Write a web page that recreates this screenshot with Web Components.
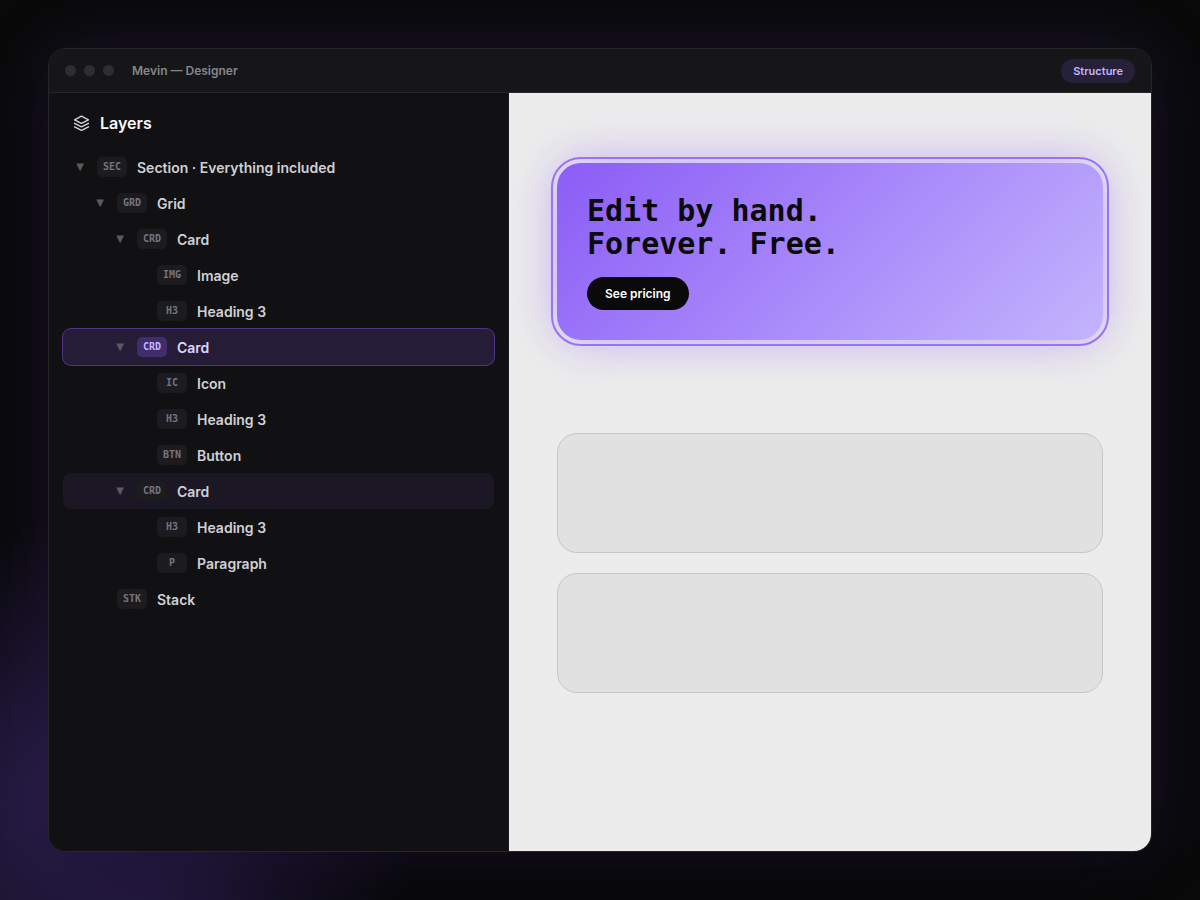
<!DOCTYPE html>
<html lang="en">
<head>
<meta charset="utf-8">
<meta name="viewport" content="width=device-width, initial-scale=1">
<title>Mevin — Designer</title>
<style>
  html { background: #0a0a0a; }
  body { margin: 0; font-family: Inter, "Liberation Sans", sans-serif; color: #d4d4d8; }
</style>
</head>
<body>
<designer-stage>
  <designer-window heading="Mevin — Designer" mode="Structure">
    <layers-panel slot="side">
      <layer-row depth="0" tag="SEC" open>Section · Everything included</layer-row>
      <layer-row depth="1" tag="GRD" open>Grid</layer-row>
      <layer-row depth="2" tag="CRD" open>Card</layer-row>
      <layer-row depth="3" tag="IMG" leaf>Image</layer-row>
      <layer-row depth="3" tag="H3" leaf>Heading 3</layer-row>
      <layer-row depth="2" tag="CRD" open selected>Card</layer-row>
      <layer-row depth="3" tag="IC" leaf>Icon</layer-row>
      <layer-row depth="3" tag="H3" leaf>Heading 3</layer-row>
      <layer-row depth="3" tag="BTN" leaf>Button</layer-row>
      <layer-row depth="2" tag="CRD" open hovered>Card</layer-row>
      <layer-row depth="3" tag="H3" leaf>Heading 3</layer-row>
      <layer-row depth="3" tag="P" leaf>Paragraph</layer-row>
      <layer-row depth="1" tag="STK" leaf>Stack</layer-row>
    </layers-panel>
    <design-canvas slot="main">
      <promo-card slot="active">
        Edit by hand.<br>Forever. Free.
        <span slot="action">See pricing</span>
      </promo-card>
      <empty-card></empty-card>
      <empty-card></empty-card>
    </design-canvas>
  </designer-window>
</designer-stage>

<script>
  const define = (name, html, setup) => {
    const template = document.createElement('template');
    template.innerHTML = html;
    customElements.define(name, class extends HTMLElement {
      constructor() {
        super();
        this.attachShadow({ mode: 'open' }).append(template.content.cloneNode(true));
      }
      connectedCallback() {
        if (setup) setup(this, this.shadowRoot);
      }
    });
  };

  define('designer-stage', `
    <style>
      :host {
        display: grid;
        box-sizing: border-box;
        min-height: 100vh;
        padding: 48px;
        overflow: hidden;
        background: radial-gradient(circle 300px at 10% 90%, #34235c 0%, #291d48 30%, #19132a 60%, transparent 100%) #0a0a0a;
      }
    </style>
    <slot></slot>`);

  define('designer-window', `
    <style>
      :host {
        display: flex;
        flex-direction: column;
        min-width: 0;
        overflow: hidden;
        border: 1px solid #262629;
        border-radius: 18px;
        background: #111113;
        box-shadow: 0 0 70px rgba(139, 92, 246, .15), 0 30px 80px rgba(0, 0, 0, .6);
      }
      header {
        display: flex;
        align-items: center;
        gap: 18px;
        height: 43px;
        padding: 0 16px;
        border-bottom: 1px solid #262629;
        background: #161618;
      }
      .dots { display: flex; gap: 8px; }
      .dots i { width: 11px; height: 11px; border-radius: 50%; background: #2e2d34; }
      h1 { flex: 1; margin: 0; font-size: 12px; line-height: 16px; font-weight: 600; color: #85858c; }
      button {
        padding: 0 12px;
        border: 0;
        border-radius: 12px;
        background: #272039;
        color: #c4b5fd;
        font: 600 11px/24px Inter, "Liberation Sans", sans-serif;
      }
      .body { flex: 1; display: grid; grid-template-columns: 460px minmax(0, 1fr); }
    </style>
    <header>
      <div class="dots"><i></i><i></i><i></i></div>
      <h1></h1>
      <button type="button"></button>
    </header>
    <div class="body"><slot name="side"></slot><slot name="main"></slot></div>`,
    (host, root) => {
      root.querySelector('h1').textContent = host.getAttribute('heading');
      root.querySelector('button').textContent = host.getAttribute('mode');
    });

  define('layers-panel', `
    <style>
      :host { display: block; padding: 18px 14px; border-right: 1px solid #1c1c20; background: #111113; }
      h2 {
        display: flex;
        align-items: center;
        gap: 9px;
        margin: 0 0 14px;
        padding: 0 10px;
        font-size: 16px;
        line-height: 24px;
        font-weight: 600;
        color: #fafafa;
      }
      svg { width: 18px; height: 18px; color: #d4d4d8; }
    </style>
    <h2>
      <svg viewBox="0 0 18 18" fill="none" stroke="currentColor" stroke-width="1.3" stroke-linecap="round" stroke-linejoin="round" aria-hidden="true">
        <path d="M8.5 2.2 1.5 5.8l7 3.6 7-3.6Z"/><path d="m1.5 9.3 7 3.6 7-3.6"/><path d="m1.5 12.8 7 3.6 7-3.6"/>
      </svg>
      Layers
    </h2>
    <div role="tree" aria-label="Layers"><slot></slot></div>`);

  define('layer-row', `
    <style>
      :host {
        display: flex;
        align-items: center;
        gap: 10px;
        height: 36px;
        padding-right: 10px;
        padding-left: calc(10px + var(--depth, 0) * 20px);
        border-radius: 8px;
        font-size: 14px;
        font-weight: 600;
        color: #d0d0d4;
      }
      button {
        width: 14px;
        padding: 0;
        border: 0;
        background: none;
        color: #5a5a60;
        font: 10px/16px "DejaVu Sans", sans-serif;
        text-align: center;
      }
      :host([leaf]) button { visibility: hidden; }
      .tag {
        width: 30px;
        border-radius: 5px;
        background: #1c1c20;
        color: #75757d;
        font: 700 10px/20px "DejaVu Sans Mono", monospace;
        text-align: center;
      }
      :host([hovered]) { background: #1b1725; }
      :host([selected]) {
        background: #251d37;
        box-shadow: 0 0 0 1px #503488;
        color: #ddd6fe;
      }
      :host([selected]) .tag { background: #3f2d6c; color: #c4b5fd; }
    </style>
    <button type="button" aria-label="Collapse layer">▼</button>
    <span class="tag"></span>
    <span><slot></slot></span>`,
    (host, root) => {
      host.setAttribute('role', 'treeitem');
      host.style.setProperty('--depth', host.getAttribute('depth'));
      root.querySelector('.tag').textContent = host.getAttribute('tag');
      if (host.hasAttribute('leaf')) root.querySelector('button').textContent = '';
    });

  define('design-canvas', `
    <style>
      :host { display: block; padding: 70px 48px; overflow: hidden; background: #ececec; }
      .stack { display: grid; gap: 20px; margin-top: 93px; }
    </style>
    <slot name="active"></slot>
    <div class="stack"><slot></slot></div>`);

  define('promo-card', `
    <style>
      :host {
        display: block;
        padding: 31px 30px 30px;
        border-radius: 24px;
        outline: 2px solid #9b72f5;
        outline-offset: 4px;
        background: linear-gradient(135deg, #8b5cf6, #c4b5fd);
        box-shadow: 0 0 48px rgba(139, 92, 246, .48);
      }
      h3 {
        margin: 0 0 17px;
        font: 700 30px/33px "DejaVu Sans Mono", monospace;
        color: #0a0a0a;
      }
      a {
        display: block;
        width: fit-content;
        padding: 0 18px;
        border-radius: 17px;
        background: #0a0a0a;
        color: #fff;
        font-size: 12px;
        line-height: 33px;
        font-weight: 600;
        text-decoration: none;
      }
    </style>
    <h3><slot></slot></h3>
    <a href="#pricing"><slot name="action"></slot></a>`);

  define('empty-card', `
    <style>
      :host {
        display: block;
        box-sizing: border-box;
        height: 120px;
        border: 1px solid #c6c6c6;
        border-radius: 20px;
        background: #e1e1e1;
      }
    </style>`);
</script>
</body>
</html>
